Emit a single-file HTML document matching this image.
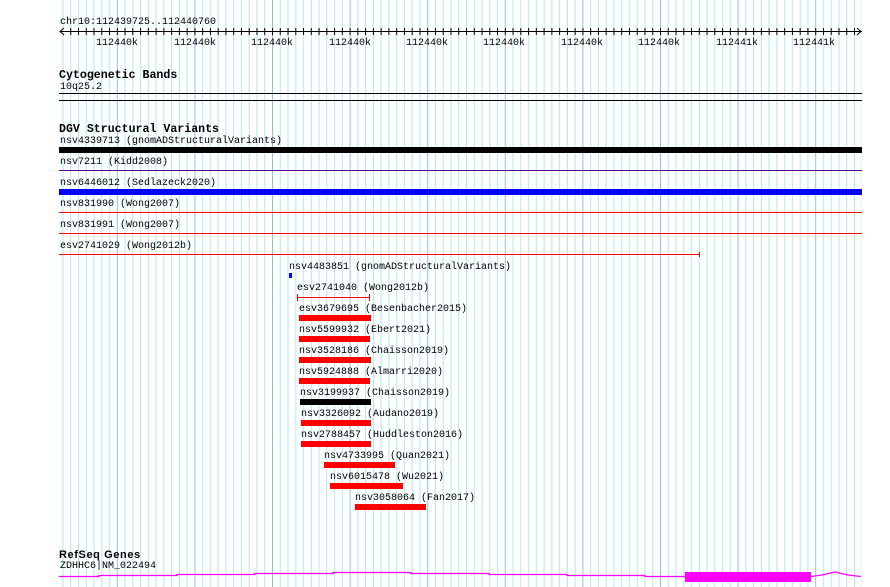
<!DOCTYPE html>
<html><head><meta charset="utf-8"><style>
body{margin:0;width:890px;height:587px;background:#fff;position:relative;overflow:hidden}
.t{position:absolute;font:10px/10px "Liberation Mono",monospace;color:#000;white-space:pre}
.b{position:absolute;font:bold 11.6px/12px "Liberation Mono",monospace;color:#000;white-space:pre}
svg{position:absolute;left:0;top:0}
</style></head><body>
<svg width="890" height="587" viewBox="0 0 890 587">
<defs>
<pattern id="g" patternUnits="userSpaceOnUse" x="39.2" y="0" width="77.6" height="587">
<rect x="0" y="0" width="1" height="587" fill="#86c6ea"/>
<rect x="7.76" width="1" height="587" fill="#aee8f0"/>
<rect x="15.52" width="1" height="587" fill="#aee8f0"/>
<rect x="23.28" width="1" height="587" fill="#aee8f0"/>
<rect x="31.04" width="1" height="587" fill="#aee8f0"/>
<rect x="38.8" width="1" height="587" fill="#aee8f0"/>
<rect x="46.56" width="1" height="587" fill="#aee8f0"/>
<rect x="54.32" width="1" height="587" fill="#aee8f0"/>
<rect x="62.08" width="1" height="587" fill="#aee8f0"/>
<rect x="69.84" width="1" height="587" fill="#aee8f0"/>
</pattern>
<pattern id="tk" patternUnits="userSpaceOnUse" x="39.2" y="0" width="7.76" height="40">
<rect x="0" y="28" width="1" height="7" fill="#000"/>
</pattern>
</defs>
<rect x="60" y="0" width="802" height="587" fill="url(#g)"/>
<rect x="60" y="31" width="802" height="1" fill="#000"/>
<rect x="64" y="28" width="796" height="7" fill="url(#tk)"/>
<path d="M64 28 L60 31.5 L64 35 M857 28 L861 31.5 L857 35" stroke="#000" fill="none"/>
<rect x="59" y="93" width="803" height="1" fill="#000"/>
<rect x="59" y="100" width="803" height="1" fill="#000"/>
<rect x="59" y="147" width="803" height="6" fill="#000"/>
<rect x="59" y="170" width="803" height="1" fill="#60009a"/>
<rect x="59" y="189" width="803" height="6" fill="#0000ff"/>
<rect x="59" y="212" width="803" height="1" fill="#ff0000"/>
<rect x="59" y="233" width="803" height="1" fill="#ff0000"/>
<rect x="59" y="254" width="641" height="1" fill="#ff0000"/>
<rect x="699" y="252" width="1" height="5" fill="#ff0000"/>
<rect x="289" y="273" width="3" height="5" fill="#0000ff"/>
<rect x="297" y="297" width="72" height="1" fill="#ff0000"/>
<rect x="297" y="294" width="1" height="7" fill="#ff0000"/>
<rect x="369" y="294" width="1" height="7" fill="#ff0000"/>
<rect x="299" y="315" width="72" height="6" fill="#ff0000"/>
<rect x="299" y="336" width="71" height="6" fill="#ff0000"/>
<rect x="299" y="357" width="72" height="6" fill="#ff0000"/>
<rect x="299" y="378" width="71" height="6" fill="#ff0000"/>
<rect x="300" y="399" width="71" height="6" fill="#000"/>
<rect x="301" y="420" width="70" height="6" fill="#ff0000"/>
<rect x="301" y="441" width="70" height="6" fill="#ff0000"/>
<rect x="324" y="462" width="71" height="6" fill="#ff0000"/>
<rect x="330" y="483" width="73" height="6" fill="#ff0000"/>
<rect x="355" y="504" width="71" height="6" fill="#ff0000"/>
<path d="M59 576.5 H99 V575.5 H177 V574.5 H255 V573.5 H333 V572.5 H411 V573.5 H489 V574.5 H567 V575.5 H645 V576.5 H685 M811 576.5 L822 575 L835 572 L848 575 L861 576.5" stroke="#ff00ff" stroke-width="1.3" fill="none"/>
<rect x="685" y="572" width="126" height="10" fill="#ff00ff"/>
</svg>

<div class="t" style="left:60px;top:18px">chr10:112439725..112440760</div>
<div class="t" style="left:96px;top:39px">112440k</div>
<div class="t" style="left:174px;top:39px">112440k</div>
<div class="t" style="left:251px;top:39px">112440k</div>
<div class="t" style="left:329px;top:39px">112440k</div>
<div class="t" style="left:406px;top:39px">112440k</div>
<div class="t" style="left:483px;top:39px">112440k</div>
<div class="t" style="left:561px;top:39px">112440k</div>
<div class="t" style="left:638px;top:39px">112440k</div>
<div class="t" style="left:716px;top:39px">112441k</div>
<div class="t" style="left:793px;top:39px">112441k</div>

<div class="b" style="left:59px;top:70px">Cytogenetic Bands</div>
<div class="t" style="left:60px;top:83px">10q25.2</div>

<div class="b" style="left:59px;top:124px">DGV Structural Variants</div>
<div class="t" style="left:60px;top:137px">nsv4339713 (gnomADStructuralVariants)</div>
<div class="t" style="left:60px;top:158px">nsv7211 (Kidd2008)</div>
<div class="t" style="left:60px;top:179px">nsv6446012 (Sedlazeck2020)</div>
<div class="t" style="left:60px;top:200px">nsv831990 (Wong2007)</div>
<div class="t" style="left:60px;top:221px">nsv831991 (Wong2007)</div>
<div class="t" style="left:60px;top:242px">esv2741029 (Wong2012b)</div>
<div class="t" style="left:289px;top:263px">nsv4483851 (gnomADStructuralVariants)</div>
<div class="t" style="left:297px;top:284px">esv2741040 (Wong2012b)</div>
<div class="t" style="left:299px;top:305px">esv3679695 (Besenbacher2015)</div>
<div class="t" style="left:299px;top:326px">nsv5599932 (Ebert2021)</div>
<div class="t" style="left:299px;top:347px">nsv3528186 (Chaisson2019)</div>
<div class="t" style="left:299px;top:368px">nsv5924888 (Almarri2020)</div>
<div class="t" style="left:300px;top:389px">nsv3199937 (Chaisson2019)</div>
<div class="t" style="left:301px;top:410px">nsv3326092 (Audano2019)</div>
<div class="t" style="left:301px;top:431px">nsv2788457 (Huddleston2016)</div>
<div class="t" style="left:324px;top:452px">nsv4733995 (Quan2021)</div>
<div class="t" style="left:330px;top:473px">nsv6015478 (Wu2021)</div>
<div class="t" style="left:355px;top:494px">nsv3058064 (Fan2017)</div>

<div class="b" style="left:59px;top:549px;font-family:'Liberation Sans',sans-serif;font-size:11px;letter-spacing:0.6px">RefSeq Genes</div>
<div class="t" style="left:60px;top:562px">ZDHHC6|NM_022494</div>
</body></html>
